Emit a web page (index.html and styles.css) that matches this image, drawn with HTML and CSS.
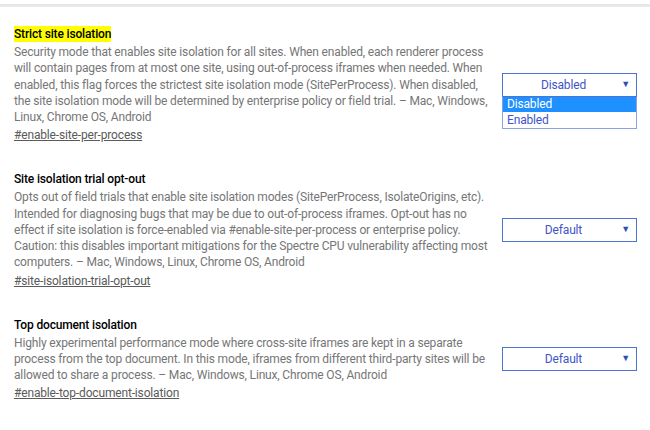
FILE: index.html
```html
<!doctype html>
<html lang="en">
<head>
  <meta charset="UTF-8">
  <title>Experiments</title>
  <link rel="stylesheet" href="styles.css">
</head>
<body>
  <div class="header-shadow"></div>
  <div class="experiments">
    <div class="experiment">
      <div class="experiment-text">
        <h3 class="experiment-name"><span class="highlight">Strict site isolation</span></h3>
        <p class="experiment-desc">Security mode that enables site isolation for all sites. When enabled, each renderer process will contain pages from at most one site, using out-of-process iframes when needed. When enabled, this flag forces the strictest site isolation mode (SitePerProcess). When disabled, the site isolation mode will be determined by enterprise policy or field trial. – Mac, Windows, Linux, Chrome OS, Android</p>
        <a class="permalink" href="#enable-site-per-process">#enable-site-per-process</a>
      </div>
      <div class="select-wrap">
        <div class="select">Disabled<span class="arrow">▼</span></div>
        <ul class="options">
          <li class="option selected">Disabled</li>
          <li class="option">Enabled</li>
        </ul>
      </div>
    </div>

    <div class="experiment">
      <div class="experiment-text">
        <h3 class="experiment-name">Site isolation trial opt-out</h3>
        <p class="experiment-desc">Opts out of field trials that enable site isolation modes (SitePerProcess, IsolateOrigins, etc). Intended for diagnosing bugs that may be due to out-of-process iframes. Opt-out has no effect if site isolation is force-enabled via #enable-site-per-process or enterprise policy. Caution: this disables important mitigations for the Spectre CPU vulnerability affecting most computers. – Mac, Windows, Linux, Chrome OS, Android</p>
        <a class="permalink" href="#site-isolation-trial-opt-out">#site-isolation-trial-opt-out</a>
      </div>
      <div class="select-wrap">
        <div class="select">Default<span class="arrow">▼</span></div>
      </div>
    </div>

    <div class="experiment">
      <div class="experiment-text">
        <h3 class="experiment-name">Top document isolation</h3>
        <p class="experiment-desc">Highly experimental performance mode where cross-site iframes are kept in a separate process from the top document. In this mode, iframes from different third-party sites will be allowed to share a process. – Mac, Windows, Linux, Chrome OS, Android</p>
        <a class="permalink" href="#enable-top-document-isolation">#enable-top-document-isolation</a>
      </div>
      <div class="select-wrap">
        <div class="select">Default<span class="arrow">▼</span></div>
      </div>
    </div>
  </div>
</body>
</html>
```

FILE: styles.css
```css
body {
  font-family: Roboto, 'Liberation Sans', sans-serif;
  font-size: 12px;
  letter-spacing: -0.16px;
  background: #fff;
  color: #333;
  margin: 0;
}
.header-shadow {
  height: 3px;
  margin-top: 4px;
  background: linear-gradient(#e4e4e4, #ececec);
}
.experiments {
  padding: 19px 13px 0 14px;
}
.experiment {
  display: flex;
  align-items: center;
  padding-bottom: 28px;
}
.experiment-text {
  flex: 0 0 478px;
}
.experiment-name {
  margin: 0 0 2px;
  font-size: 12px;
  font-weight: 500;
  line-height: 16px;
  color: #000;
}
.highlight {
  background: #ffff00;
  padding: 1px 0;
}
.experiment-desc {
  margin: 0 0 2px;
  line-height: 16.25px;
  color: #767676;
}
.permalink {
  display: block;
  line-height: 16px;
  color: #5a5a5a;
  text-decoration: underline;
  width: max-content;
}
.select-wrap {
  position: relative;
  margin-left: auto;
  width: 135px;
}
.select {
  box-sizing: border-box;
  position: relative;
  height: 24px;
  line-height: 22px;
  border: 1px solid #4f73d4;
  padding-right: 12px;
  text-align: center;
  font-size: 12px;
  color: #4155c8;
}
.arrow {
  position: absolute;
  right: 6px;
  top: -1px;
  font-size: 9px;
  color: #2f4fb0;
}
.options {
  position: absolute;
  top: 24px;
  left: 0;
  right: 0;
  margin: 0;
  padding: 0;
  list-style: none;
  border: 1px solid #8aa2e2;
  border-top: none;
  background: #fff;
}
.option {
  height: 16px;
  line-height: 16px;
  padding-left: 4px;
  font-size: 12px;
  color: #4155c8;
}
.option.selected {
  height: 15px;
  line-height: 15px;
  background: #1e90ff;
  color: #fff;
}
```
